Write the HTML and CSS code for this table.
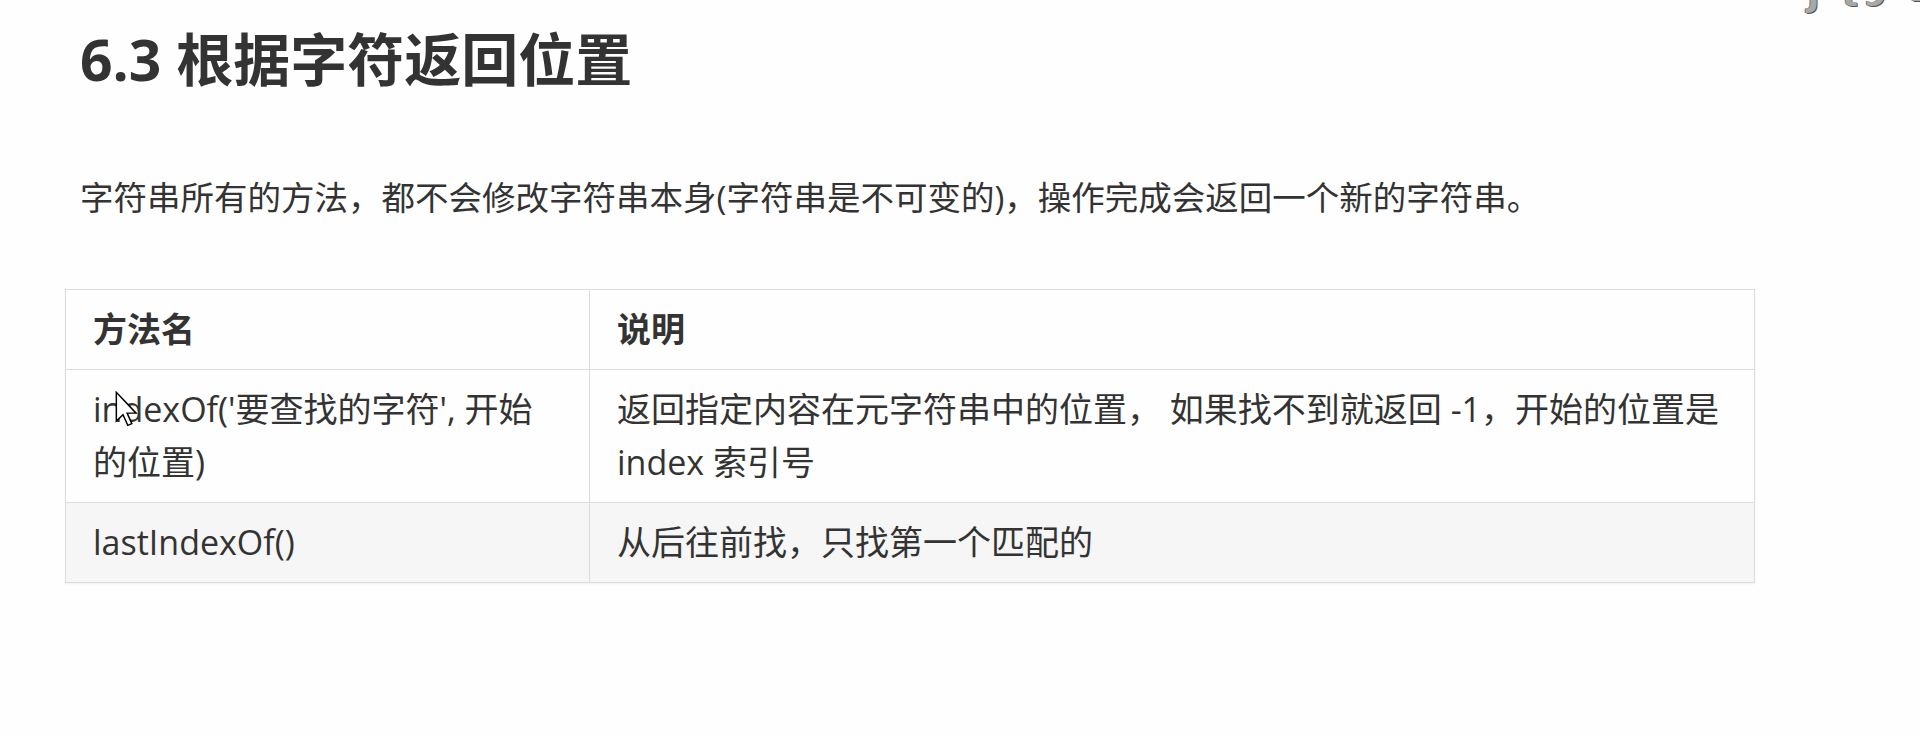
FILE: index.html
```html
<!DOCTYPE html>
<html lang="zh-CN">
<head>
<meta charset="utf-8">
<title>6.3 根据字符返回位置</title>
<link rel="stylesheet" href="styles.css">
</head>
<body>
<div class="corner">J t9 =</div>
<main class="page">
  <h2 class="title">6.3 根据字符返回位置</h2>
  <p class="intro">字符串所有的方法，都不会修改字符串本身(字符串是不可变的)，操作完成会返回一个新的字符串。</p>
  <div class="table-wrap">
    <table class="methods">
      <colgroup>
        <col class="col-name">
        <col class="col-desc">
      </colgroup>
      <thead>
        <tr><th>方法名</th><th>说明</th></tr>
      </thead>
      <tbody>
        <tr>
          <td>indexOf('要查找的字符', 开始的位置)</td>
          <td>返回指定内容在元字符串中的位置， 如果找不到就返回 -1，开始的位置是 index 索引号</td>
        </tr>
        <tr class="alt">
          <td>lastIndexOf()</td>
          <td>从后往前找，只找第一个匹配的</td>
        </tr>
      </tbody>
    </table>
    <svg class="cursor" width="24" height="36" viewBox="0 0 18 27" aria-hidden="true">
      <path d="M1 1 L1 22.5 L6 17.8 L9.6 25.8 L12.6 24.5 L9.1 16.6 L15.8 16.6 Z" fill="#fff" stroke="#000" stroke-width="1.1" stroke-linejoin="miter"/>
    </svg>
  </div>
</main>
</body>
</html>
```
FILE: styles.css
```css
html, body {
  margin: 0;
  padding: 0;
  background: #fdfefd;
}

body {
  font-family: "Open Sans", "Noto Sans CJK SC", sans-serif;
  color: #333;
  position: relative;
  min-height: 736px;
  overflow: hidden;
}

.page {
  padding: 0 0 0 80px;
}

.title {
  margin: 0;
  padding-top: 24px;
  font-family: "Open Sans", "Noto Sans CJK SC", sans-serif;
  font-size: 57px;
  line-height: 71px;
  font-weight: 700;
  color: #333;
}

.intro {
  margin: 76px 0 0 0;
  font-size: 33.5px;
  line-height: 53px;
  color: #333;
}

.table-wrap {
  position: relative;
  margin: 65px 0 0 -15px;
  width: 1690px;
}

.methods {
  border-collapse: collapse;
  width: 1690px;
  table-layout: fixed;
  font-size: 34px;
  line-height: 53px;
  color: #333;
  box-shadow: 0 1px 2px rgba(0, 0, 0, 0.06);
}

.col-name { width: 524px; }

.methods th,
.methods td {
  border: 1px solid #dcdcdc;
  padding: 13px 27px;
  text-align: left;
  vertical-align: middle;
}

.methods th {
  font-weight: 700;
}

.methods tr {
  background: #fdfefd;
}

.methods tr.alt {
  background: #f5f6f5;
}

.cursor {
  position: absolute;
  left: 50px;
  top: 102px;
}

.corner {
  position: absolute;
  right: -22px;
  top: -24px;
  font-family: "DejaVu Sans", sans-serif;
  font-size: 32px;
  font-weight: 700;
  letter-spacing: 6px;
  white-space: nowrap;
  color: #a8a8a8;
  text-shadow: 1px 1px 0 #555, -1px 0 0 #777;
}
```
